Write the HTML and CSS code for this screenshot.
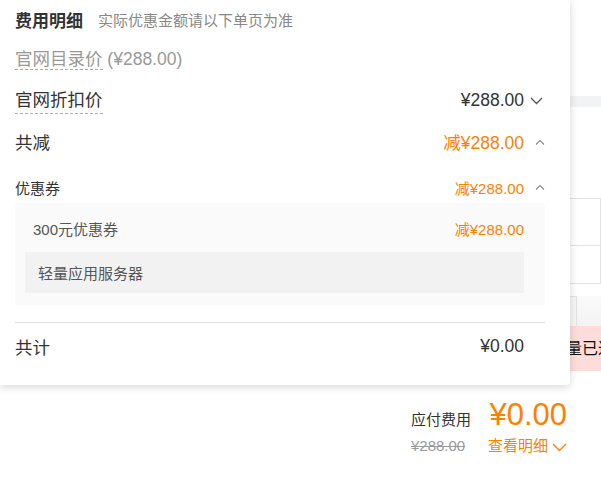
FILE: index.html
```html
<!DOCTYPE html>
<html lang="zh-CN">
<head>
<meta charset="utf-8">
<title>费用明细</title>
<link rel="stylesheet" href="styles.css">
</head>
<body>
<div class="page">
  <div class="band"></div>
  <div class="cards">
    <div class="card card-a"><div class="card-top"></div><div class="card-bottom"></div></div>
    <div class="card card-b"><div class="card-top"></div><div class="card-bottom"></div></div>
  </div>
  <div class="cards cards-2">
    <div class="card card-a"></div>
  </div>
  <div class="alert">额量已达上限</div>
  <div class="summary">
    <div class="sum-label">应付费用</div>
    <div class="sum-total">¥0.00</div>
    <div class="sum-orig">¥288.00</div>
    <div class="sum-link">查看明细
      <svg class="sum-chev" width="15" height="9" viewBox="0 0 15 9"><path d="M1 1 L7.5 7.5 L14 1" fill="none" stroke="#ff8000" stroke-width="1.4"/></svg>
    </div>
  </div>
</div>

<div class="popup">
  <div class="head">
    <span class="head-title">费用明细</span>
    <span class="head-sub">实际优惠金额请以下单页为准</span>
  </div>
  <div class="row row-list">
    <span class="dashed dashed-tight">官网目录价</span><span class="list-price">&nbsp;(¥288.00)</span>
  </div>
  <div class="row row-disc">
    <span class="dashed dashed-loose">官网折扣价</span>
    <span class="row-right"><span class="val">¥288.00</span>
      <span class="chev-slot"><svg class="chev-down" width="13" height="8" viewBox="0 0 13 8"><path d="M1 1 L6.5 6.5 L12 1" fill="none" stroke="#555" stroke-width="1.3"/></svg></span>
    </span>
  </div>
  <div class="row row-cut">
    <span>共减</span>
    <span class="row-right"><span class="val orange">减¥288.00</span>
      <span class="chev-slot"><svg class="chev-up" width="10" height="6" viewBox="0 0 10 6"><path d="M1 5.5 L5 1.5 L9 5.5" fill="none" stroke="#888" stroke-width="1.1"/></svg></span>
    </span>
  </div>
  <div class="row row-coupon">
    <span>优惠券</span>
    <span class="row-right"><span class="val orange">减¥288.00</span>
      <span class="chev-slot"><svg class="chev-up" width="10" height="6" viewBox="0 0 10 6"><path d="M1 5.5 L5 1.5 L9 5.5" fill="none" stroke="#888" stroke-width="1.1"/></svg></span>
    </span>
  </div>
  <div class="coupon-box">
    <div class="coupon-row">
      <span>300元优惠券</span>
      <span class="orange">减¥288.00</span>
    </div>
    <div class="coupon-product">轻量应用服务器</div>
  </div>
  <div class="divider"></div>
  <div class="row row-total">
    <span>共计</span>
    <span class="val">¥0.00</span>
  </div>
</div>
</body>
</html>
```

FILE: styles.css
```css
* { box-sizing: border-box; }
html, body {
  margin: 0;
  padding: 0;
}
body {
  width: 601px;
  height: 481px;
  overflow: hidden;
  position: relative;
  background: #fff;
  font-family: "Liberation Sans", "Noto Sans CJK SC", sans-serif;
  color: #333;
}

/* ---------- background page ---------- */
.page {
  padding-top: 96px;
}
.band {
  height: 11px;
  background: #f2f3f5;
}
.cards {
  display: flex;
  gap: 13px;
  margin-top: 91px;
  padding-left: 400px;
}
.cards-2 {
  margin-top: 12px;
  height: 30px;
  background: linear-gradient(#fafafa, #f3f3f3);
}
.card {
  border: 1px solid #e3e3e3;
  background: #fff;
}
.card-a { width: 177px; }
.card-b { width: 200px; }
.cards .card { height: 86px; }
.cards-2 .card { height: 30px; border-bottom: 0; background: #f7f7f7; }
.card-top {
  height: 47px;
  border-bottom: 1px solid #e3e3e3;
}
.alert {
  height: 45px;
  background: #fddcda;
  color: #111;
  font-size: 16px;
  line-height: 45px;
  padding-left: 550px;
  white-space: nowrap;
  overflow: hidden;
}
.summary {
  display: grid;
  grid-template-columns: auto auto;
  justify-content: end;
  column-gap: 17px;
  padding-right: 34px;
  margin-top: 27px;
}
.sum-label {
  font-size: 15px;
  color: #333;
  align-self: end;
  line-height: 20px;
  padding-bottom: 2px;
}
.sum-total {
  font-size: 31px;
  color: #ff8000;
  line-height: 34px;
  justify-self: end;
}
.sum-orig {
  font-size: 15px;
  color: #999;
  text-decoration: line-through;
  line-height: 20px;
  margin-top: 4px;
}
.sum-link {
  font-size: 15px;
  color: #ff8000;
  line-height: 20px;
  margin-top: 4px;
  display: flex;
  align-items: center;
}
.sum-chev { margin-left: 4px; margin-top: 2px; }

/* ---------- popup ---------- */
.popup {
  position: absolute;
  left: 0;
  top: 0;
  width: 570px;
  height: 385px;
  background: #fff;
  border-radius: 0 0 4px 0;
  box-shadow: 0 2px 8px rgba(0, 0, 0, 0.16);
  padding: 0 25px 0 15px;
}
.head {
  height: 39px;
  display: flex;
  align-items: center;
  gap: 15px;
}
.head-title {
  font-size: 17px;
  font-weight: bold;
  color: #333;
}
.head-sub {
  font-size: 15px;
  color: #888;
}
.row {
  display: flex;
  align-items: center;
  justify-content: space-between;
  font-size: 17.5px;
  color: #333;
}
.row-list {
  height: 41px;
  justify-content: flex-start;
  color: #999;
}
.row-disc { height: 41px; }
.row-cut { height: 41px; }
.row-coupon {
  height: 32px;
  margin-top: 9px;
  font-size: 15px;
}
.row-total {
  height: 46px;
  padding-right: 21px;
}
.dashed {
  display: inline-block;
  line-height: 20px;
  border-bottom: 1px dashed #aaa;
}
.dashed-tight { padding-bottom: 0; }
.dashed-loose { padding-bottom: 3px; margin-top: 3px; }
.list-price { color: #999; }
.row-right {
  display: flex;
  align-items: center;
}
.chev-slot {
  width: 21px;
  display: flex;
  justify-content: flex-end;
}
.chev-down { margin-right: 2px; }
.chev-up { margin-right: 0; }
.orange { color: #ff8000; }

.coupon-box {
  background: #fafafa;
  padding: 4px 21px 12px 18px;
}
.coupon-row {
  height: 42px;
  display: flex;
  align-items: center;
  justify-content: space-between;
  font-size: 15px;
  color: #555;
}
.coupon-product {
  height: 41px;
  margin-top: 3px;
  margin-left: -8px;
  background: #f2f2f2;
  padding-left: 13px;
  display: flex;
  align-items: center;
  font-size: 15px;
  color: #555;
}
.divider {
  margin-top: 17px;
  height: 1px;
  background: #dcdcdc;
}
```
